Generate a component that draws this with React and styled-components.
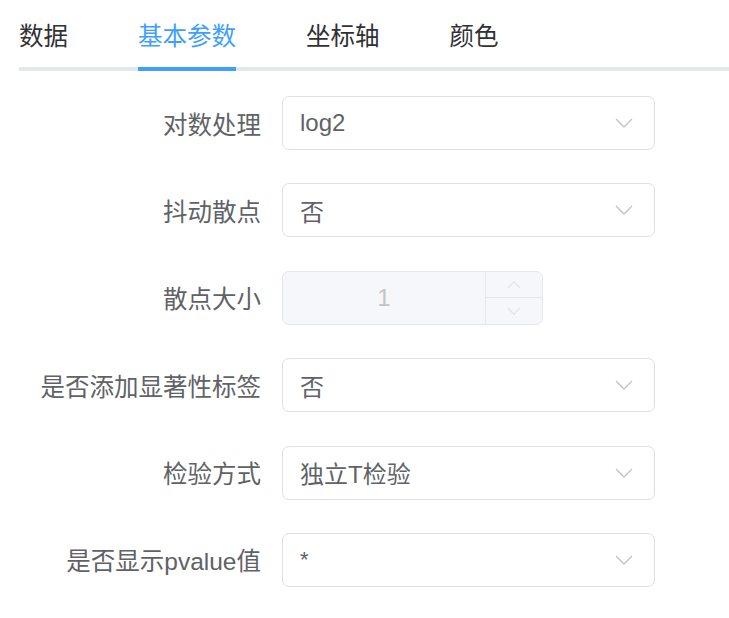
import styled, { createGlobalStyle } from "styled-components";

const GlobalStyle = createGlobalStyle`
  body {
    margin: 0;
    background: #fff;
    font-family: "Liberation Sans", "Noto Sans CJK SC", sans-serif;
  }
`;

const Page = styled.div`
  padding: 0 0 0 19px;
  overflow: hidden;
`;

const TabBar = styled.div`
  display: flex;
  height: 67px;
  align-items: center;
  border-bottom: 4px solid #e4e7ed;
  margin-right: -20px;
`;

const Tab = styled.div`
  position: relative;
  height: 100%;
  display: flex;
  align-items: center;
  padding: 2px 35px 0;
  box-sizing: border-box;
  font-size: 24.5px;
  color: ${(p) => (p.active ? "#409eff" : "#303133")};

  &:first-child {
    padding-left: 0;
  }

  &::after {
    content: "";
    display: ${(p) => (p.active ? "block" : "none")};
    position: absolute;
    left: 35px;
    right: 35px;
    bottom: -4px;
    height: 4px;
    background: #409eff;
  }
`;

const Form = styled.div`
  padding-top: 25px;
  display: flex;
  flex-direction: column;
  gap: 33.4px;
`;

const Row = styled.div`
  display: flex;
  align-items: center;
  height: 54px;
`;

const Label = styled.label`
  width: 242px;
  padding-right: 21px;
  text-align: right;
  font-size: 24.5px;
  color: #606266;
  white-space: nowrap;
`;

const SelectBox = styled.div`
  box-sizing: border-box;
  width: 373px;
  height: 54px;
  border: 1px solid #dcdfe6;
  border-radius: 7px;
  display: flex;
  align-items: center;
  padding: 0 21px 0 17px;
  font-size: 24px;
  color: #606266;
`;

const Value = styled.span`
  flex: 1;
  ${(p) => p.star && "align-self: flex-start; padding-top: 13px; font-size: 22px;"}
`;

const NumberBox = styled.div`
  box-sizing: border-box;
  width: 261px;
  height: 54px;
  border: 1px solid #e4e7ed;
  border-radius: 7px;
  background: #f5f7fa;
  display: flex;
  overflow: hidden;
`;

const NumberValue = styled.div`
  flex: 1;
  display: flex;
  align-items: center;
  justify-content: center;
  font-size: 24px;
  color: #c0c4cc;
`;

const Controls = styled.div`
  width: 56px;
  border-left: 1px solid #e4e7ed;
  display: flex;
  flex-direction: column;
`;

const Step = styled.div`
  flex: 1;
  display: flex;
  align-items: center;
  justify-content: center;
  & + & {
    border-top: 1px solid #e4e7ed;
  }
`;

const Chevron = ({ up, w = 18, color = "#c0c4cc" }) => (
  <svg width={w} height={w / 2 + 1} viewBox="0 0 18 10">
    <polyline
      points={up ? "1,9 9,1 17,9" : "1,1 9,9 17,1"}
      fill="none"
      stroke={color}
      strokeWidth="1.4"
    />
  </svg>
);

const Select = ({ value, star }) => (
  <SelectBox>
    <Value star={star}>{value}</Value>
    <Chevron />
  </SelectBox>
);

export default function App() {
  return (
    <Page>
      <GlobalStyle />
      <TabBar>
        <Tab>数据</Tab>
        <Tab active>基本参数</Tab>
        <Tab>坐标轴</Tab>
        <Tab>颜色</Tab>
      </TabBar>
      <Form>
        <Row>
          <Label>对数处理</Label>
          <Select value="log2" />
        </Row>
        <Row>
          <Label>抖动散点</Label>
          <Select value="否" />
        </Row>
        <Row>
          <Label>散点大小</Label>
          <NumberBox>
            <NumberValue>1</NumberValue>
            <Controls>
              <Step>
                <Chevron up w={14} color="#dfe2e8" />
              </Step>
              <Step>
                <Chevron w={14} color="#dfe2e8" />
              </Step>
            </Controls>
          </NumberBox>
        </Row>
        <Row>
          <Label>是否添加显著性标签</Label>
          <Select value="否" />
        </Row>
        <Row>
          <Label>检验方式</Label>
          <Select value="独立T检验" />
        </Row>
        <Row>
          <Label>是否显示pvalue值</Label>
          <Select value="*" star />
        </Row>
      </Form>
    </Page>
  );
}
